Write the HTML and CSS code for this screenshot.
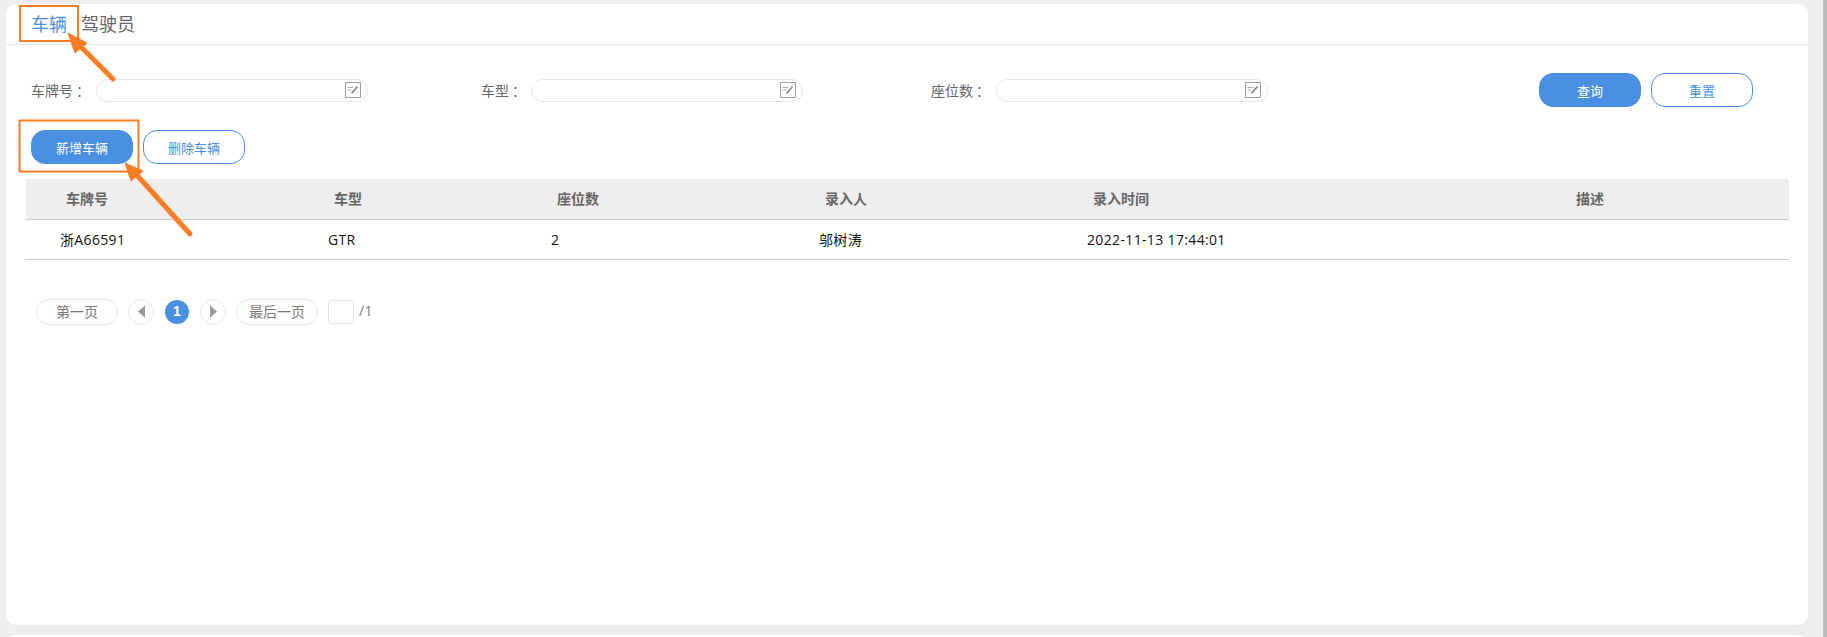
FILE: index.html
```html
<!DOCTYPE html>
<html lang="zh">
<head>
<meta charset="utf-8">
<title>车辆</title>
<link rel="stylesheet" href="styles.css">
</head>
<body>
<svg width="0" height="0" class="defs">
  <symbol id="pick" viewBox="0 0 16 16">
    <rect x="0.5" y="0.5" width="15" height="15" fill="#fff" stroke="#a0a0a0" stroke-width="1"/>
    <path d="M2.5 5.5h6M2.5 8h3.5" stroke="#b0b0b0" stroke-width="1.2" fill="none"/>
    <path d="M6.5 11.5l6-7" stroke="#8a8a8a" stroke-width="1.8" fill="none"/>
  </symbol>
</svg>
<main class="card">
  <nav class="tabs">
    <a class="tab active">车辆</a>
    <a class="tab">驾驶员</a>
  </nav>
  <section class="filters">
    <div class="field f1">
      <label class="lbl">车牌号<span class="colon">：</span></label>
      <div class="inp"><svg class="pick"><use href="#pick"/></svg></div>
    </div>
    <div class="field f2">
      <label class="lbl">车型<span class="colon">：</span></label>
      <div class="inp"><svg class="pick"><use href="#pick"/></svg></div>
    </div>
    <div class="field f3">
      <label class="lbl">座位数<span class="colon">：</span></label>
      <div class="inp"><svg class="pick"><use href="#pick"/></svg></div>
    </div>
    <div class="btns">
      <button class="btn primary">查询</button>
      <button class="btn ghost">重置</button>
    </div>
  </section>
  <section class="actions">
    <button class="btn primary">新增车辆</button>
    <button class="btn ghost">删除车辆</button>
  </section>
  <table class="grid">
    <colgroup>
      <col class="c1"><col class="c2"><col class="c3"><col class="c4"><col class="c5"><col>
    </colgroup>
    <thead>
      <tr><th>车牌号</th><th>车型</th><th>座位数</th><th>录入人</th><th>录入时间</th><th>描述</th></tr>
    </thead>
    <tbody>
      <tr><td>浙A66591</td><td>GTR</td><td>2</td><td>邬树涛</td><td>2022-11-13 17:44:01</td><td></td></tr>
    </tbody>
  </table>
  <div class="pager">
    <a class="pg wide">第一页</a>
    <a class="pg round"><svg class="tri" viewBox="0 0 8 14"><path d="M8 0v14L0 7z"/></svg></a>
    <a class="pg current">1</a>
    <a class="pg round"><svg class="tri" viewBox="0 0 8 14"><path d="M0 0v14l8-7z"/></svg></a>
    <a class="pg wide">最后一页</a>
    <span class="jump"></span>
    <span class="total">/1</span>
  </div>
</main>
<div class="next-card"></div>
<div class="scroll"></div>
<svg class="notes" width="1827" height="637" viewBox="0 0 1827 637">
  <rect x="20" y="6" width="58" height="35" class="box"/>
  <rect x="19.5" y="120.5" width="119" height="51" class="box"/>
  <path d="M113 79L78 44" class="shaft"/>
  <path d="M68 33L87 43L75 53z" class="head"/>
  <path d="M190 234L135 173" class="shaft"/>
  <path d="M125 163L143 171L131 181z" class="head"/>
</svg>
</body>
</html>
```

FILE: styles.css
```css
* { box-sizing: border-box; }
html, body { margin: 0; height: 637px; overflow: hidden; }
body {
  position: relative;
  background: #eeeeee;
  padding: 4px 19px 0 6px;
  font-family: "Noto Sans CJK SC", "Noto Sans", sans-serif;
  color: #666;
}
.defs { position: absolute; }
.card {
  height: 621px;
  background: #fff;
  border-radius: 10px;
}
.next-card {
  height: 10px;
  margin-top: 10px;
  background: #fff;
  border-radius: 10px 10px 0 0;
}
.scroll {
  position: absolute;
  top: 0;
  right: 0;
  width: 4px;
  height: 637px;
  background: #bcbcbc;
}
.tabs {
  height: 41px;
  border-bottom: 1px solid #e6e6e6;
  display: flex;
  align-items: center;
  gap: 14px;
  padding: 0 0 1px 25px;
}
.tab { font-size: 18px; line-height: 39px; color: #666; }
.tab.active { color: #4a90e2; }
.filters {
  display: flex;
  align-items: center;
  height: 34px;
  margin-top: 28px;
  padding-left: 25px;
}
.field { display: flex; align-items: center; }
.f1 { width: 450px; }
.f2 { width: 450px; }
.f3 { width: 608px; }
.lbl { font-size: 14px; color: #666; white-space: nowrap; }
.colon { margin-left: 3px; }
.f1 .lbl, .f3 .lbl { width: 65px; }
.f2 .lbl { width: 50px; }
.inp {
  width: 272px;
  height: 23px;
  border: 1px solid #e6e6e6;
  border-radius: 12px;
  display: flex;
  align-items: center;
  justify-content: flex-end;
  padding-right: 6px;
}
.pick { width: 16px; height: 16px; display: block; }
.btns { display: flex; gap: 10px; }
.btn {
  width: 102px;
  height: 34px;
  border-radius: 14px;
  font-family: inherit;
  font-size: 13px;
  line-height: 1;
  padding: 0;
  border: 1px solid #4a90e2;
}
.primary { background: #4a90e2; color: #fff; }
.ghost { background: #fff; color: #4a90e2; }
.actions {
  display: flex;
  gap: 10px;
  margin-top: 23px;
  padding-left: 25px;
}
.grid {
  margin: 15px 0 0 20px;
  width: 1763px;
  border-collapse: collapse;
  table-layout: fixed;
}
.c1 { width: 268px; }
.c2 { width: 223px; }
.c3, .c4 { width: 268px; }
.c5 { width: 483px; }
.grid th {
  height: 40px;
  padding: 0 0 2px 40px;
  background: #eeeeee;
  border-bottom: 1px solid #cccccc;
  text-align: left;
  font-size: 14px;
  font-weight: 700;
  color: #666;
}
.grid td {
  height: 40px;
  padding: 0 0 0 34px;
  border-bottom: 1px solid #cccccc;
  font-family: "Open Sans", "Noto Sans CJK SC", sans-serif;
  font-size: 14px;
  letter-spacing: 0.35px;
  color: #111;
}
.pager {
  display: flex;
  align-items: center;
  margin-top: 39px;
  padding-left: 30px;
  height: 26px;
}
.pg {
  display: flex;
  align-items: center;
  justify-content: center;
  height: 26px;
  padding-bottom: 1px;
  border: 1px solid #e6e6e6;
  border-radius: 13px;
  font-size: 14px;
  color: #777;
}
.wide { width: 82px; }
.round { width: 26px; margin: 0 10px; padding-bottom: 0; }
.current {
  width: 24px;
  height: 24px;
  border: 0;
  background: #4a90e2;
  color: #fff;
  font-family: "Liberation Sans", sans-serif;
  font-size: 14px;
  font-weight: 700;
  margin: 0 1px;
}
.tri { width: 7px; height: 13px; fill: #999; }
.jump {
  width: 26px;
  height: 24px;
  margin-left: 10px;
  border: 1px solid #e0e0e0;
  border-radius: 3px;
}
.total { margin-left: 5px; padding-bottom: 2px; font-family: "Open Sans", sans-serif; font-size: 14px; letter-spacing: 0.4px; color: #777; }
.notes { position: absolute; left: 0; top: 0; pointer-events: none; }
.box { fill: none; stroke: #fd7d24; stroke-width: 2; }
.shaft { fill: none; stroke: #fd7d24; stroke-width: 5; stroke-linecap: round; }
.head { fill: #fd7d24; stroke: #fd7d24; stroke-width: 1; stroke-linejoin: round; }
```
